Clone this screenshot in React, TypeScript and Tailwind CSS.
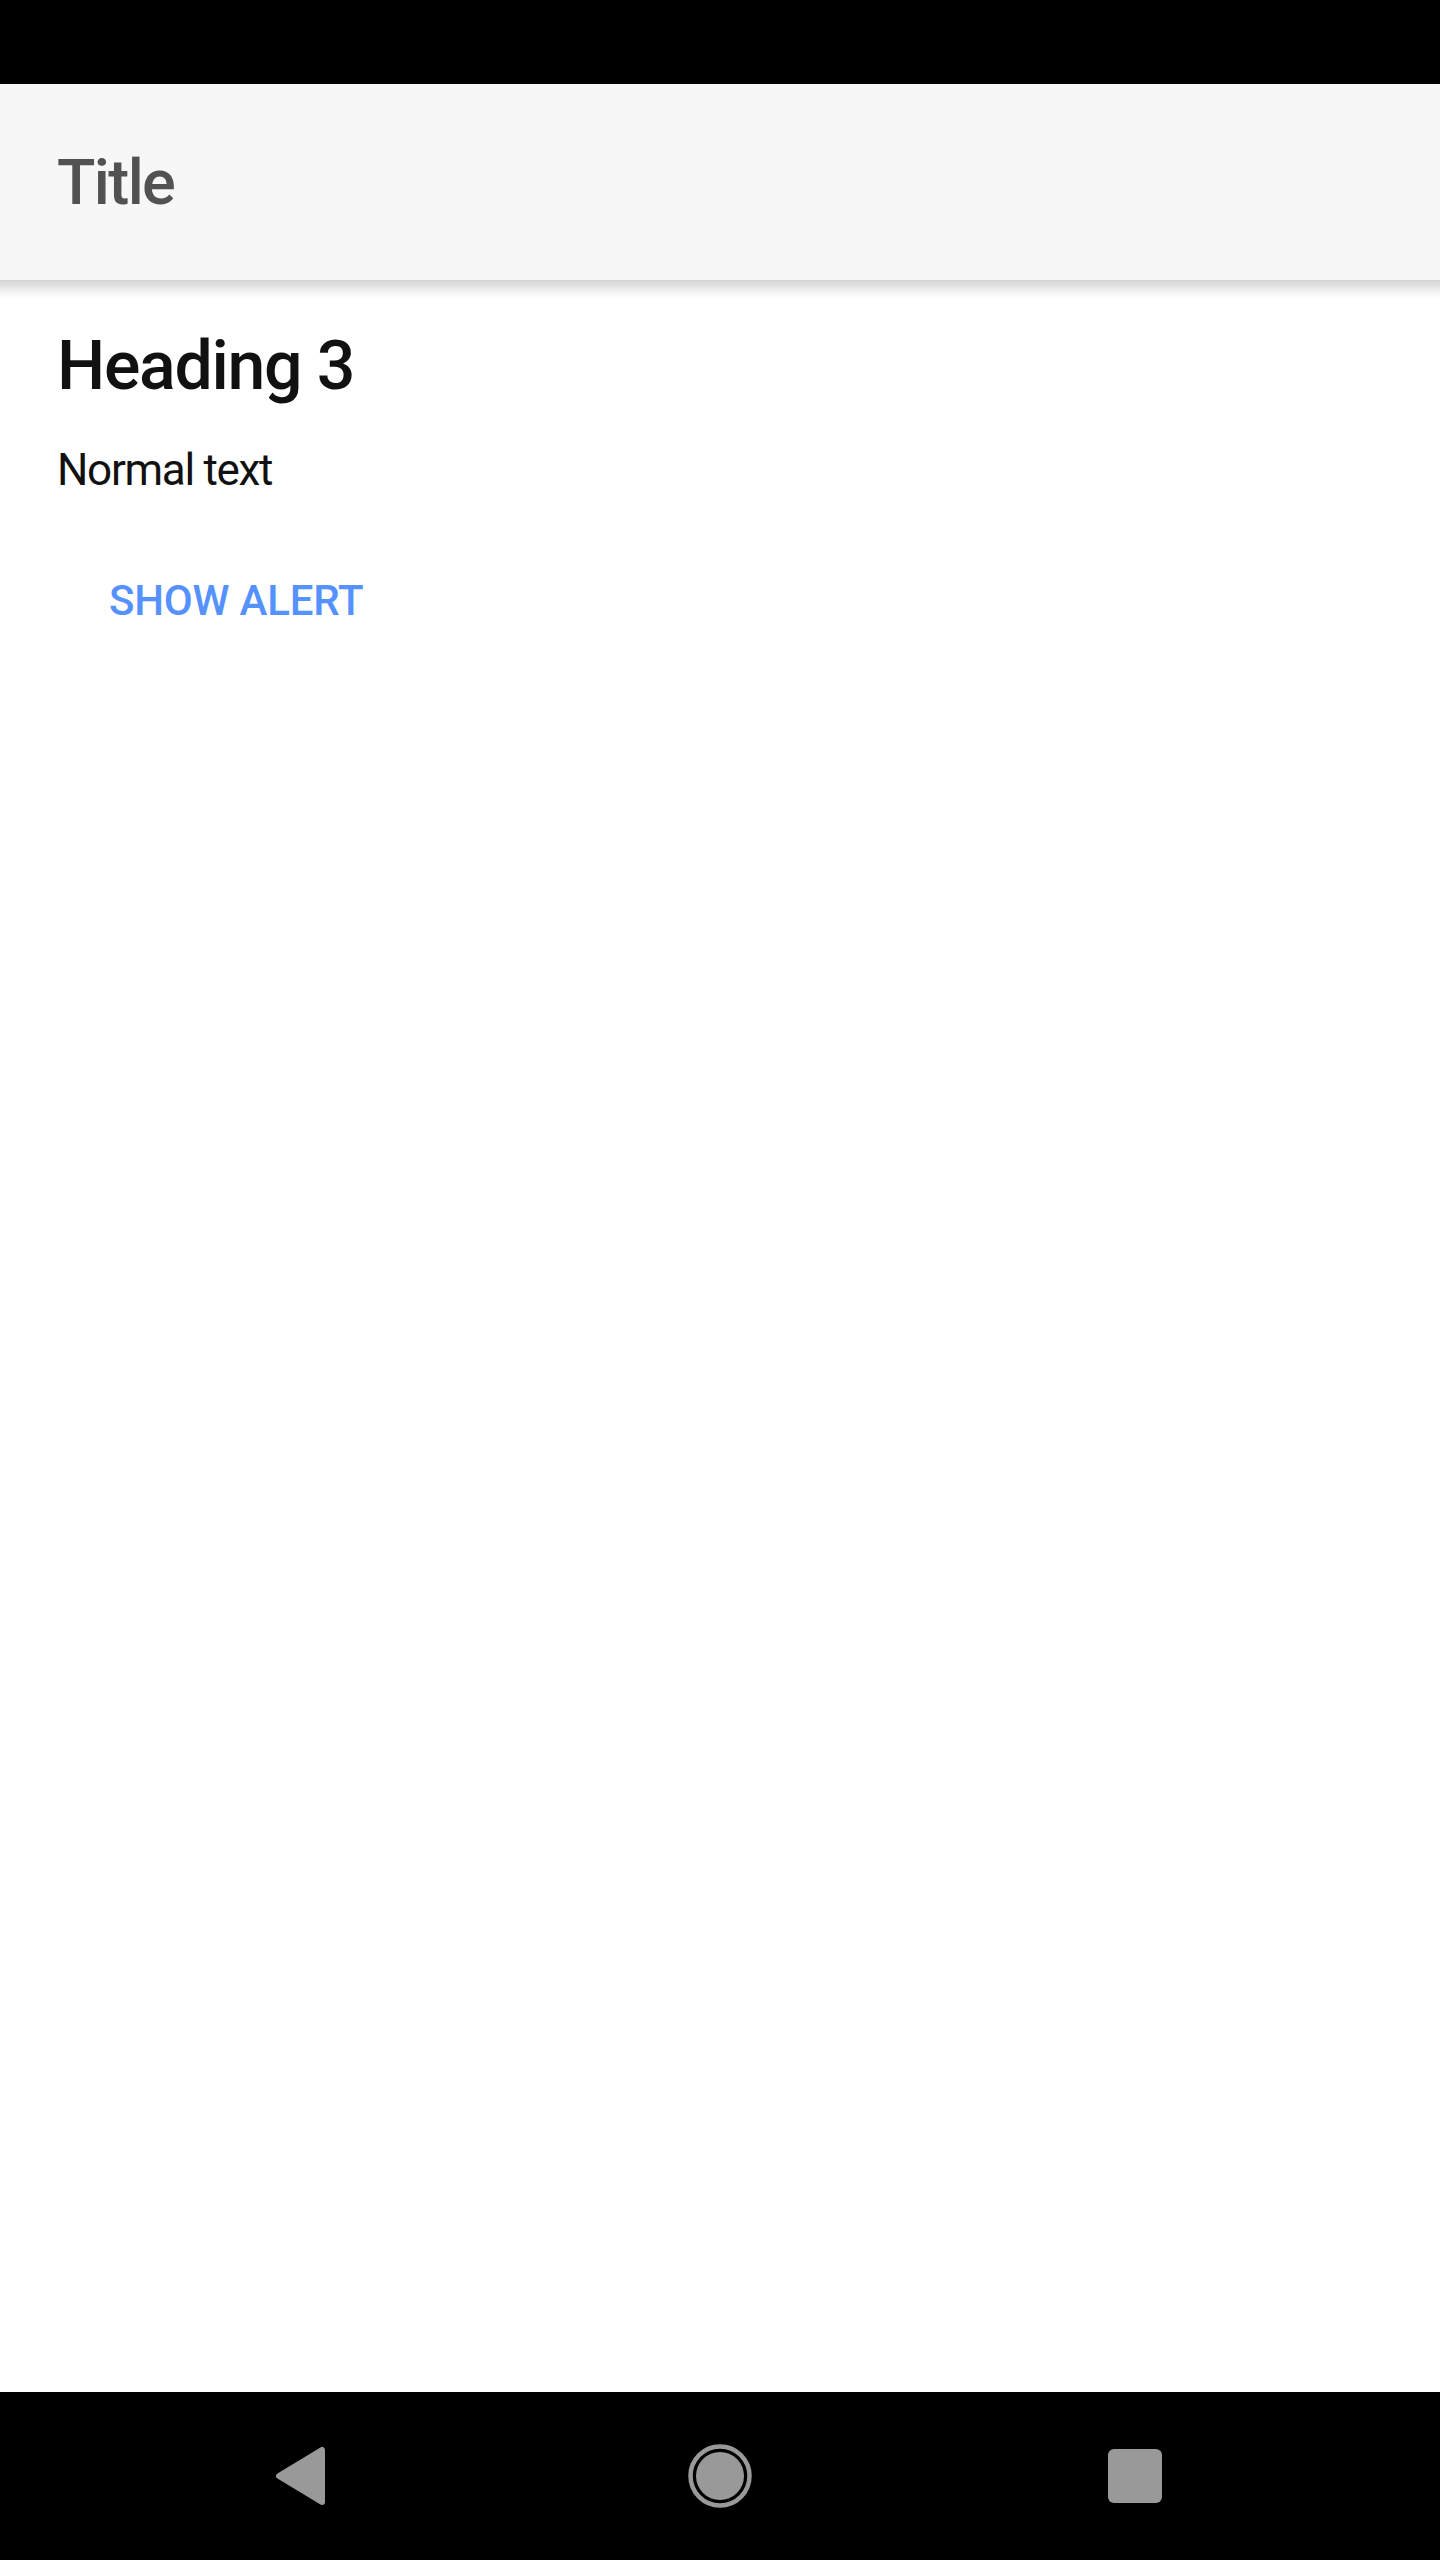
import React from "react";

export default function App() {
  return (
    <div className="flex h-[2560px] w-[1440px] flex-col bg-white font-['Roboto',sans-serif]">
      <div className="h-[84px] w-full shrink-0 bg-black" />
      <header className="flex h-[196px] shrink-0 items-center bg-[#f7f7f7] pl-[57px]">
        <h1 className="text-[63px] font-medium leading-none tracking-[-1.6px] text-[#525252]">Title</h1>
      </header>
      <div className="h-[18px] shrink-0 bg-gradient-to-b from-[#d3d3d3] via-[#ececec] to-white" />
      <main className="flex flex-1 flex-col items-start pl-[57px]">
        <h3 className="mt-[34px] text-[68px] font-medium leading-none tracking-[-1.3px] text-[#111111]">Heading 3</h3>
        <p className="mt-[48px] text-[44px] leading-none tracking-[-1.3px] text-[#111111]">Normal text</p>
        <button className="mt-[88px] ml-[52px] text-[42px] font-medium uppercase leading-none tracking-[-0.2px] text-[#5592ff]">
          Show alert
        </button>
      </main>
      <nav className="flex h-[168px] shrink-0 items-center bg-black">
        <div className="ml-[248px] flex w-[100px] justify-center">
          <svg width="56" height="64" viewBox="0 0 56 64">
            <path d="M52 6 L52 58 L9 32 Z" fill="#999999" stroke="#999999" strokeWidth="6" strokeLinejoin="round" />
          </svg>
        </div>
        <div className="ml-[322px] flex w-[100px] justify-center">
          <svg width="64" height="64" viewBox="0 0 64 64">
            <circle cx="32" cy="32" r="29.5" fill="none" stroke="#999999" strokeWidth="4.5" />
            <circle cx="32" cy="32" r="24" fill="#999999" />
          </svg>
        </div>
        <div className="ml-[315px] flex w-[100px] justify-center">
          <div className="h-[54px] w-[54px] rounded-[6px] bg-[#999999]" />
        </div>
      </nav>
    </div>
  );
}
